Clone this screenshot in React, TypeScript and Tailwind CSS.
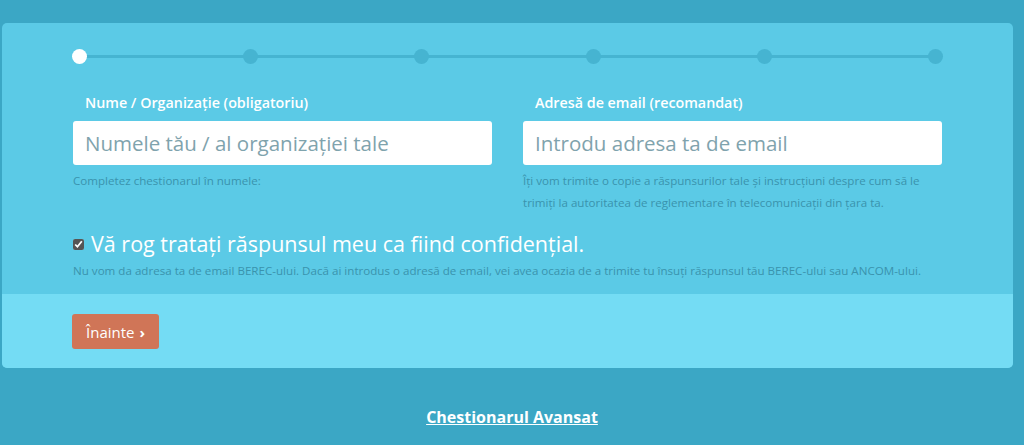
export default function App() {
  const steps = [0, 1, 2, 3, 4, 5];
  return <div className="min-h-[445px] w-full bg-[#3ba7c5] pt-[23px] font-['Open_Sans',sans-serif]">
    <div className="mx-[2px] mr-[11px] overflow-hidden rounded-[5px] bg-[#5bcae6]">
      <div className="px-[71px] pt-[25px] pb-[14px]">
        <div className="relative -mx-[1px] flex h-[16px] items-center justify-between">
          <div className="absolute left-[7px] right-[7px] top-[7px] h-[3px] bg-[#46b4d1]" />
          {steps.map(i => <span key={i} className={`relative h-[15px] w-[15px] rounded-full ${i === 0 ? 'bg-white' : 'bg-[#46b4d1]'}`} />)}
        </div>
        <div className="mt-[28px] grid grid-cols-2 gap-[31px]">
          <div>
            <label className="block pl-[12px] text-[14.3px] font-[550] text-white">Nume / Organizație (obligatoriu)</label>
            <input type="text" placeholder="Numele tău / al organizației tale" className="mt-[8px] block h-[44px] w-full rounded-[3px] bg-white px-[12px] text-[20.5px] text-[#555] outline-none placeholder:text-[#7fa3ad]" />
            <p className="mt-[5px] text-[11.6px] leading-[22px] text-[#3a93ad]">Completez chestionarul în numele:</p>
          </div>
          <div>
            <label className="block pl-[12px] text-[14.3px] font-[550] text-white">Adresă de email (recomandat)</label>
            <input type="email" placeholder="Introdu adresa ta de email" className="mt-[8px] block h-[44px] w-full rounded-[3px] bg-white px-[12px] text-[20.5px] text-[#555] outline-none placeholder:text-[#7fa3ad]" />
            <p className="mt-[5px] text-[11.6px] leading-[22px] text-[#3a93ad]">Îți vom trimite o copie a răspunsurilor tale și instrucțiuni despre cum să le trimiți la autoritatea de reglementare în telecomunicații din țara ta.</p>
          </div>
        </div>
        <label className="mt-[16px] flex items-center gap-[7px] text-[21.5px] leading-[28px] text-white">
          <input type="checkbox" defaultChecked className="h-[11px] w-[11px] accent-[#555]" />
          Vă rog tratați răspunsul meu ca fiind confidențial.
        </label>
        <p className="mt-[4px] text-[11.6px] leading-[18px] text-[#3a93ad]">Nu vom da adresa ta de email BEREC-ului. Dacă ai introdus o adresă de email, vei avea ocazia de a trimite tu însuți răspunsul tău BEREC-ului sau ANCOM-ului.</p>
      </div>
      <div className="bg-[#74dcf4] px-[70px] pt-[20px] pb-[19px]">
        <button className="flex h-[35px] items-center gap-[5px] rounded-[3px] bg-[#d07557] px-[14px] text-[15px] text-white">Înainte <span className="font-bold">›</span></button>
      </div>
    </div>
    <div className="mt-[37px] text-center">
      <a href="#" className="text-[16px] font-bold text-white underline">Chestionarul Avansat</a>
    </div>
  </div>;
}
